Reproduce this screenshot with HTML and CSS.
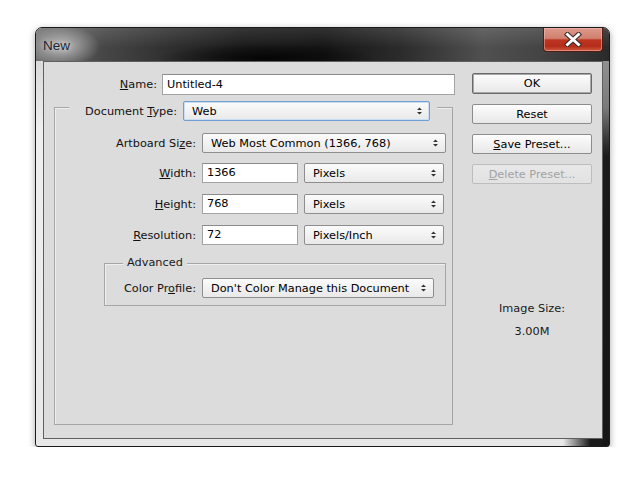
FILE: index.html
```html
<!DOCTYPE html>
<html>
<head>
<meta charset="utf-8">
<title>New</title>
<link rel="stylesheet" href="styles.css">
</head>
<body>
<div class="window">
  <div class="titlebar">
    <span class="title">New</span>
    <div class="close">
      <svg width="20" height="15" viewBox="0 0 20 15">
        <path d="M4.5 2.5 L15.5 12.5 M15.5 2.5 L4.5 12.5" stroke="#3a2a28" stroke-width="5" stroke-linecap="square"/>
        <path d="M4.5 2.5 L15.5 12.5 M15.5 2.5 L4.5 12.5" stroke="#ffffff" stroke-width="3" stroke-linecap="square"/>
      </svg>
    </div>
  </div>
  <div class="client">
    <div class="main">
      <div class="name-row">
        <span class="lbl"><u>N</u>ame:</span>
        <div class="input name">Untitled-4</div>
      </div>
      <div class="group">
        <div class="group-head">
          <span class="lbl">Document <u>T</u>ype:</span>
          <div class="select focus doctype"><span>Web</span><svg class="arr" width="5" height="8" viewBox="0 0 5 8"><path d="M0 3 L2.5 0.5 L5 3Z M0 5 L2.5 7.5 L5 5Z" fill="#333"/></svg></div>
        </div>
        <div class="rows">
          <div class="row">
            <span class="lbl">Artboard Si<u>z</u>e:</span>
            <div class="select artboard"><span>Web Most Common (1366, 768)</span><svg class="arr" width="5" height="8" viewBox="0 0 5 8"><path d="M0 3 L2.5 0.5 L5 3Z M0 5 L2.5 7.5 L5 5Z" fill="#333"/></svg></div>
          </div>
          <div class="row r2">
            <span class="lbl"><u>W</u>idth:</span>
            <div class="input num">1366</div>
            <div class="select unit"><span>Pixels</span><svg class="arr" width="5" height="8" viewBox="0 0 5 8"><path d="M0 3 L2.5 0.5 L5 3Z M0 5 L2.5 7.5 L5 5Z" fill="#333"/></svg></div>
          </div>
          <div class="row r3">
            <span class="lbl"><u>H</u>eight:</span>
            <div class="input num">768</div>
            <div class="select unit"><span>Pixels</span><svg class="arr" width="5" height="8" viewBox="0 0 5 8"><path d="M0 3 L2.5 0.5 L5 3Z M0 5 L2.5 7.5 L5 5Z" fill="#333"/></svg></div>
          </div>
          <div class="row r3">
            <span class="lbl"><u>R</u>esolution:</span>
            <div class="input num">72</div>
            <div class="select unit"><span>Pixels/Inch</span><svg class="arr" width="5" height="8" viewBox="0 0 5 8"><path d="M0 3 L2.5 0.5 L5 3Z M0 5 L2.5 7.5 L5 5Z" fill="#333"/></svg></div>
          </div>
        </div>
        <div class="adv">
          <span class="adv-legend">Advanced</span>
          <div class="row prof">
            <span class="lbl">Color Pr<u>o</u>file:</span>
            <div class="select profile"><span>Don't Color Manage this Document</span><svg class="arr" width="5" height="8" viewBox="0 0 5 8"><path d="M0 3 L2.5 0.5 L5 3Z M0 5 L2.5 7.5 L5 5Z" fill="#333"/></svg></div>
          </div>
        </div>
      </div>
    </div>
    <div class="side">
      <div class="btn ok">OK</div>
      <div class="btn">Reset</div>
      <div class="btn"><u>S</u>ave Preset...</div>
      <div class="btn disabled"><u>D</u>elete Preset...</div>
      <div class="imgsize">Image Size:</div>
      <div class="imgval">3.00M</div>
    </div>
  </div>
</div>
</body>
</html>
```

FILE: styles.css
```css
* { box-sizing: border-box; }

body {
  margin: 0;
  background: #ffffff;
  font-family: "DejaVu Sans", sans-serif;
  font-size: 11.3px;
  color: #111111;
}

u { text-decoration: underline; text-underline-offset: 1px; }

.window {
  margin: 27px 0 0 35px;
  width: 575px;
  height: 420px;
  border: 1px solid #1c1c1c;
  border-radius: 7px 7px 3px 3px;
  box-shadow: 0 2px 7px rgba(0, 0, 0, 0.35);
  display: flex;
  flex-direction: column;
  position: relative;
  overflow: hidden;
  background:
    linear-gradient(to bottom, #a0a0a0 0, #7a7a7a 80px, #3a3a3a 110px, #1a1a1a 128px, #161616 100%) right top / 7px 100% no-repeat,
    linear-gradient(to right, rgba(22, 22, 22, 0) 0, #1a1a1a 60%) right bottom / 46px 8px no-repeat,
    linear-gradient(to bottom, #d0d0d0 0, #efefef 25%, #e8e8e8 100%);
}

.titlebar {
  height: 33px;
  flex: none;
  position: relative;
  padding: 10px 0 0 7px;
  background:
    radial-gradient(ellipse 38px 21px at 26px 18px, rgba(205, 205, 205, 0.85), rgba(205, 205, 205, 0)),
    radial-gradient(ellipse 110px 14px at 230px 30px, rgba(0, 0, 0, 0.8), rgba(0, 0, 0, 0)),
    linear-gradient(to bottom, rgba(255, 255, 255, 0.12), rgba(255, 255, 255, 0) 60%),
    linear-gradient(to right, #6e6e6e 0%, #464646 12%, #2e2e2e 24%, #1a1a1a 36%, #151515 50%, #2c2c2c 64%, #505050 78%, #444 88%, #2a2a2a 100%);
}

.title {
  display: block;
  font-family: "Liberation Sans", sans-serif;
  font-size: 13.5px;
  line-height: 16px;
  color: #1b2633;
  text-shadow: 0 0 5px rgba(255, 255, 255, 0.6);
}

.close {
  position: absolute;
  right: 6px;
  top: 0;
  width: 60px;
  height: 24px;
  border: 1px solid #4e1d15;
  border-top: none;
  border-radius: 0 0 4px 4px;
  box-shadow: inset 0 0 0 1px rgba(255, 200, 190, 0.45);
  background: linear-gradient(to bottom, #dd9a8c 0%, #d0806f 45%, #bd3420 52%, #b52e1c 80%, #cf5a3e 100%);
  display: flex;
  align-items: center;
  justify-content: center;
}

.client {
  margin: 0 6px 7px 7px;
  flex: 1;
  border: 1px solid #5f5f5f;
  background: #dcdcdc;
  display: flex;
  padding-top: 11px;
}

.main {
  width: 409px;
  margin-top: 1px;
}

.lbl {
  text-align: right;
  white-space: nowrap;
  flex: none;
}

.name-row {
  display: flex;
  align-items: center;
  height: 21px;
}
.name-row .lbl { width: 113px; margin-right: 5px; }

.input {
  background: #ffffff;
  border: 1px solid #a3a3a3;
  border-top-color: #8a8a8a;
  height: 20px;
  line-height: 18px;
  padding-left: 4px;
  color: #000;
  flex: none;
}
.input.name { width: 293px; height: 21px; line-height: 19px; }
.input.num { width: 96px; }

.select {
  height: 20px;
  border: 1px solid #8e8e8e;
  border-radius: 2px;
  background: linear-gradient(to bottom, #fbfbfb 0%, #f1f1f1 55%, #e9e9e9 100%);
  display: flex;
  align-items: center;
  justify-content: space-between;
  padding: 0 7px 0 8px;
  color: #000;
  flex: none;
}
.select.focus {
  border-color: #6f9fd4;
  box-shadow: inset 0 0 0 1px #c9def3;
}
.select .arr { flex: none; }
.select.doctype { width: 247px; }
.select.artboard { width: 244px; }
.select.unit { width: 140px; margin-left: 6px; }
.select.profile { width: 232px; }

.group {
  margin: 12px 0 0 10px;
  width: 399px;
  height: 318px;
  border: 1px solid #a6a6a6;
  box-shadow: inset 1px 1px 0 #efefef;
  display: flex;
  flex-direction: column;
}

.group-head {
  display: flex;
  align-items: center;
  height: 20px;
  width: 368px;
  margin: -7px 0 0 14px;
  padding-right: 7px;
  background: #dcdcdc;
}
.group-head .lbl { width: 108px; margin-right: 6px; }

.rows {
  margin-top: 12px;
  display: flex;
  flex-direction: column;
}

.row {
  display: flex;
  align-items: center;
  height: 20px;
}
.row .lbl { width: 141px; margin-right: 6px; }
.row.r2 { margin-top: 10px; }
.row.r3 { margin-top: 11px; }

.adv {
  margin: 18px 0 0 49px;
  width: 342px;
  border: 1px solid #a6a6a6;
  box-shadow: inset 1px 1px 0 #efefef;
  padding-bottom: 7px;
  display: flex;
  flex-direction: column;
  align-items: flex-start;
}
.adv-legend {
  margin: -8px 0 0 18px;
  padding: 0 4px;
  line-height: 14px;
  background: #dcdcdc;
  color: #1a1a1a;
}
.row.prof { margin-top: 8px; }
.row.prof .lbl { width: 91px; }

.side {
  margin-left: 19px;
  width: 120px;
  display: flex;
  flex-direction: column;
}

.btn {
  height: 20px;
  margin-bottom: 10px;
  border: 1px solid #8c8c8c;
  border-radius: 2px;
  background: linear-gradient(to bottom, #fdfdfd 0%, #f2f2f2 50%, #e8e8e8 100%);
  display: flex;
  align-items: center;
  justify-content: center;
  color: #000;
}
.btn.ok {
  height: 21px;
  border-color: #6a6a6a;
  box-shadow: inset 0 0 0 1px #a8a8a8;
}
.btn.disabled {
  border-color: #bdbdbd;
  background: linear-gradient(to bottom, #e8e8e8, #e2e2e2);
  color: #a2a2a2;
  margin-bottom: 0;
}

.imgsize {
  margin-top: 118px;
  line-height: 14px;
  text-align: center;
  color: #1a1a1a;
}
.imgval {
  margin-top: 9px;
  line-height: 14px;
  text-align: center;
  color: #1a1a1a;
}
```
